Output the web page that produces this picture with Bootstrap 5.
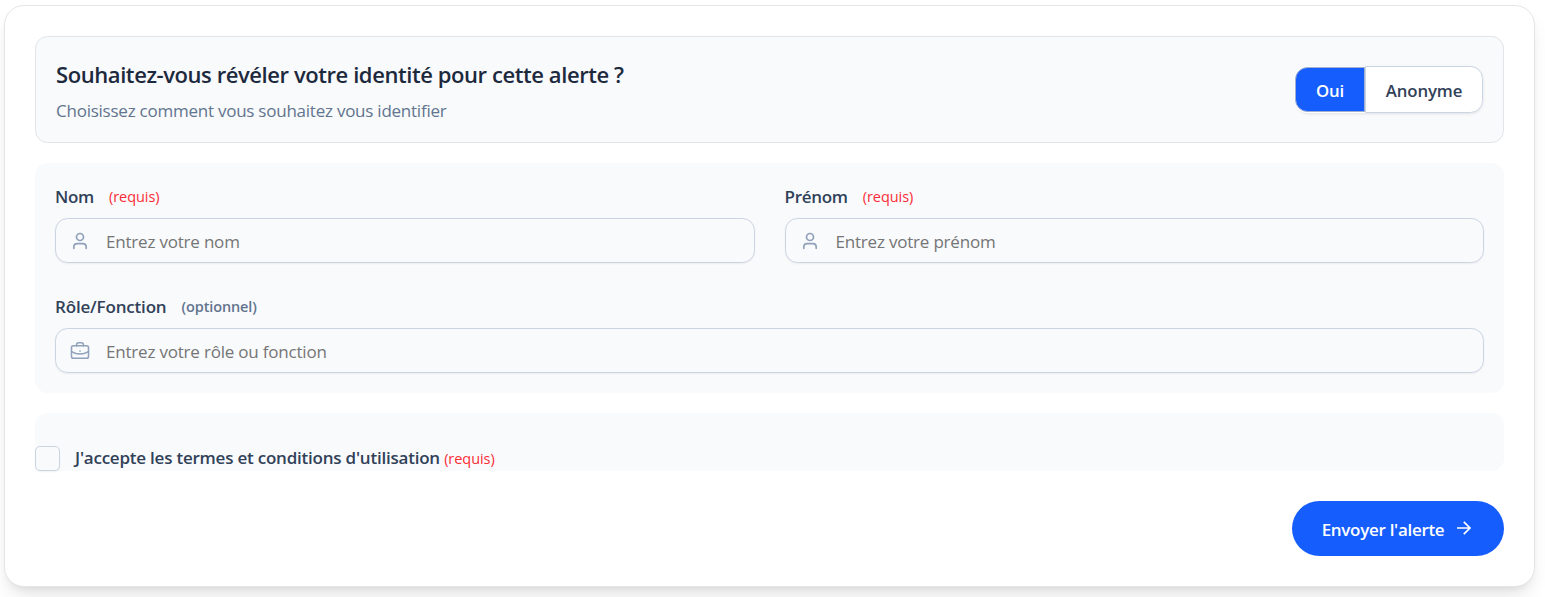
<!DOCTYPE html>
<html lang="fr">
<head>
<meta charset="utf-8">
<meta name="viewport" content="width=device-width, initial-scale=1">
<title>Envoyer une alerte</title>
<link href="https://cdn.jsdelivr.net/npm/bootstrap@5.3.0/dist/css/bootstrap.min.css" rel="stylesheet">
<style>
body{font-family:"Open Sans","Noto Sans",sans-serif;font-size:17px;color:#314158;height:597px;overflow:hidden;background:#fff}
.sheet{width:1531px;height:582px;margin:5px 0 0 4px;padding:30px;border:1px solid #e5e5e5;border-radius:20px;background:#fff;box-shadow:0 12px 19px -4px rgba(0,0,0,.1),0 5px 8px -5px rgba(0,0,0,.1)}
.panel{background:#f8fafc;border-radius:12.5px}
.identity{height:107px;border:1px solid #e2e4e8;padding:4px 20px 0;margin-bottom:20px}
.identity h1{font-size:22px;font-weight:600;line-height:30px;margin:0 0 9px;color:#1d293d;letter-spacing:-.42px}
.identity p{line-height:26px;color:#62748e;letter-spacing:-.24px}
.choice{height:47px;margin-top:-4px;border-radius:12.5px;box-shadow:0 1px 3px rgba(0,0,0,.1)}
.choice .btn{font-size:16.8px;font-weight:600;line-height:25px;letter-spacing:-.1px;border:1px solid #cad5e2;border-radius:12.5px;padding:11px 0 9px;background:#fff;color:#314158}
.choice .yes{width:69px;background:#155dfc;color:#fff;border-color:#9fb0d0;border-radius:12.5px 0 0 12.5px;box-shadow:0 0 0 1px #fff;margin:1px 0 1px -1px;padding:9px 0 8px}
.choice .yes{width:70px}
.choice .anon{width:118px;border-radius:0 12.5px 12.5px 0}
.fields{height:230px;padding:21px 20px 0;margin-bottom:20px}
.fields label{line-height:26px;height:34px;font-weight:600;letter-spacing:-.3px}
.fields label[for=role]{letter-spacing:-.17px}
.pair{column-gap:30px;margin-bottom:31px}
.pair>div{flex:1 1 0}
.caption{margin-right:15px}
.hint{font-size:14.5px;font-weight:400;color:#fb2c36;letter-spacing:-.05px}
.hint.opt{color:#62748e;font-weight:600;letter-spacing:-.12px}
.entry{height:45px;border:1px solid #cad5e2;border-radius:12.5px;padding-left:14px;box-shadow:0 1px 2px rgba(0,0,0,.06)}
.entry input{font-size:17px;letter-spacing:-.2px;background:none;padding:2px 0 0 16px;height:43px}
.entry input::placeholder{color:#757575;opacity:1}
.glyph{fill:none;stroke:#90a1b9;stroke-linecap:round;stroke-linejoin:round;flex:none}
.terms{height:58px;padding-top:33px;margin-bottom:30px}
.terms .form-check-input{width:25px;height:25px;margin:0 15px 0 0;border:1px solid #cad5e2;border-radius:5px;background-color:#f8fafc;box-shadow:0 1px 2px rgba(0,0,0,.06);flex:none}
.terms label{font-weight:600;line-height:24px;letter-spacing:-.22px}
.send{width:212px;height:55px;background:#155dfc;color:#fff;font-size:17px;font-weight:600;letter-spacing:-.3px;border:0}
.send span{padding-top:2px}
.send svg{margin:-2px 0 0 8px}
</style>
</head>
<body>
<form class="sheet">
  <section class="panel identity d-flex align-items-center justify-content-between">
    <div>
      <h1>Souhaitez-vous révéler votre identité pour cette alerte ?</h1>
      <p class="mb-0">Choisissez comment vous souhaitez vous identifier</p>
    </div>
    <div class="choice d-flex">
      <button type="button" class="btn yes">Oui</button>
      <button type="button" class="btn anon">Anonyme</button>
    </div>
  </section>
  <section class="panel fields">
    <div class="pair d-flex">
      <div>
        <label class="d-flex" for="nom"><span class="caption">Nom</span><span class="hint">(requis)</span></label>
        <div class="entry d-flex align-items-center">
          <svg class="glyph" width="20" height="20" viewBox="0 0 20 20" stroke-width="1.7"><circle cx="10" cy="6" r="3.5"/><path d="M3.8 17.3v-1.2q0-3.4 3.4-3.4h5.6q3.4 0 3.4 3.4v1.2"/></svg>
          <input id="nom" class="form-control border-0 shadow-none" placeholder="Entrez votre nom">
        </div>
      </div>
      <div>
        <label class="d-flex" for="prenom"><span class="caption">Prénom</span><span class="hint">(requis)</span></label>
        <div class="entry d-flex align-items-center">
          <svg class="glyph" width="20" height="20" viewBox="0 0 20 20" stroke-width="1.7"><circle cx="10" cy="6" r="3.5"/><path d="M3.8 17.3v-1.2q0-3.4 3.4-3.4h5.6q3.4 0 3.4 3.4v1.2"/></svg>
          <input id="prenom" class="form-control border-0 shadow-none" placeholder="Entrez votre prénom">
        </div>
      </div>
    </div>
    <label class="d-flex" for="role"><span class="caption">Rôle/Fonction</span><span class="hint opt">(optionnel)</span></label>
    <div class="entry d-flex align-items-center">
      <svg class="glyph" width="20" height="20" viewBox="0 0 20 20" stroke-width="1.5"><rect x="1.5" y="4.8" width="17" height="12.4" rx="1.8"/><path d="M6.6 4.8V3.6q0-1.8 1.8-1.8h3.2q1.8 0 1.8 1.8v1.2M1.5 10.6q8.5 5 17 0M10 10v.2"/></svg>
      <input id="role" class="form-control border-0 shadow-none" placeholder="Entrez votre rôle ou fonction">
    </div>
  </section>
  <section class="panel terms d-flex">
    <input class="form-check-input" type="checkbox" id="ok">
    <label for="ok">J'accepte les termes et conditions d'utilisation <span class="hint">(requis)</span></label>
  </section>
  <div class="d-flex justify-content-end">
    <button type="button" class="btn send rounded-pill d-flex align-items-center justify-content-center"><span>Envoyer l'alerte</span>
      <svg width="22" height="22" viewBox="0 0 22 22" fill="none" stroke="#fff" stroke-width="1.7"><path d="M5 11h13M11.8 4.8l6.2 6.2-6.2 6.2"/></svg>
    </button>
  </div>
</form>
<script src="https://cdn.jsdelivr.net/npm/bootstrap@5.3.0/dist/js/bootstrap.bundle.min.js"></script>
</body>
</html>
